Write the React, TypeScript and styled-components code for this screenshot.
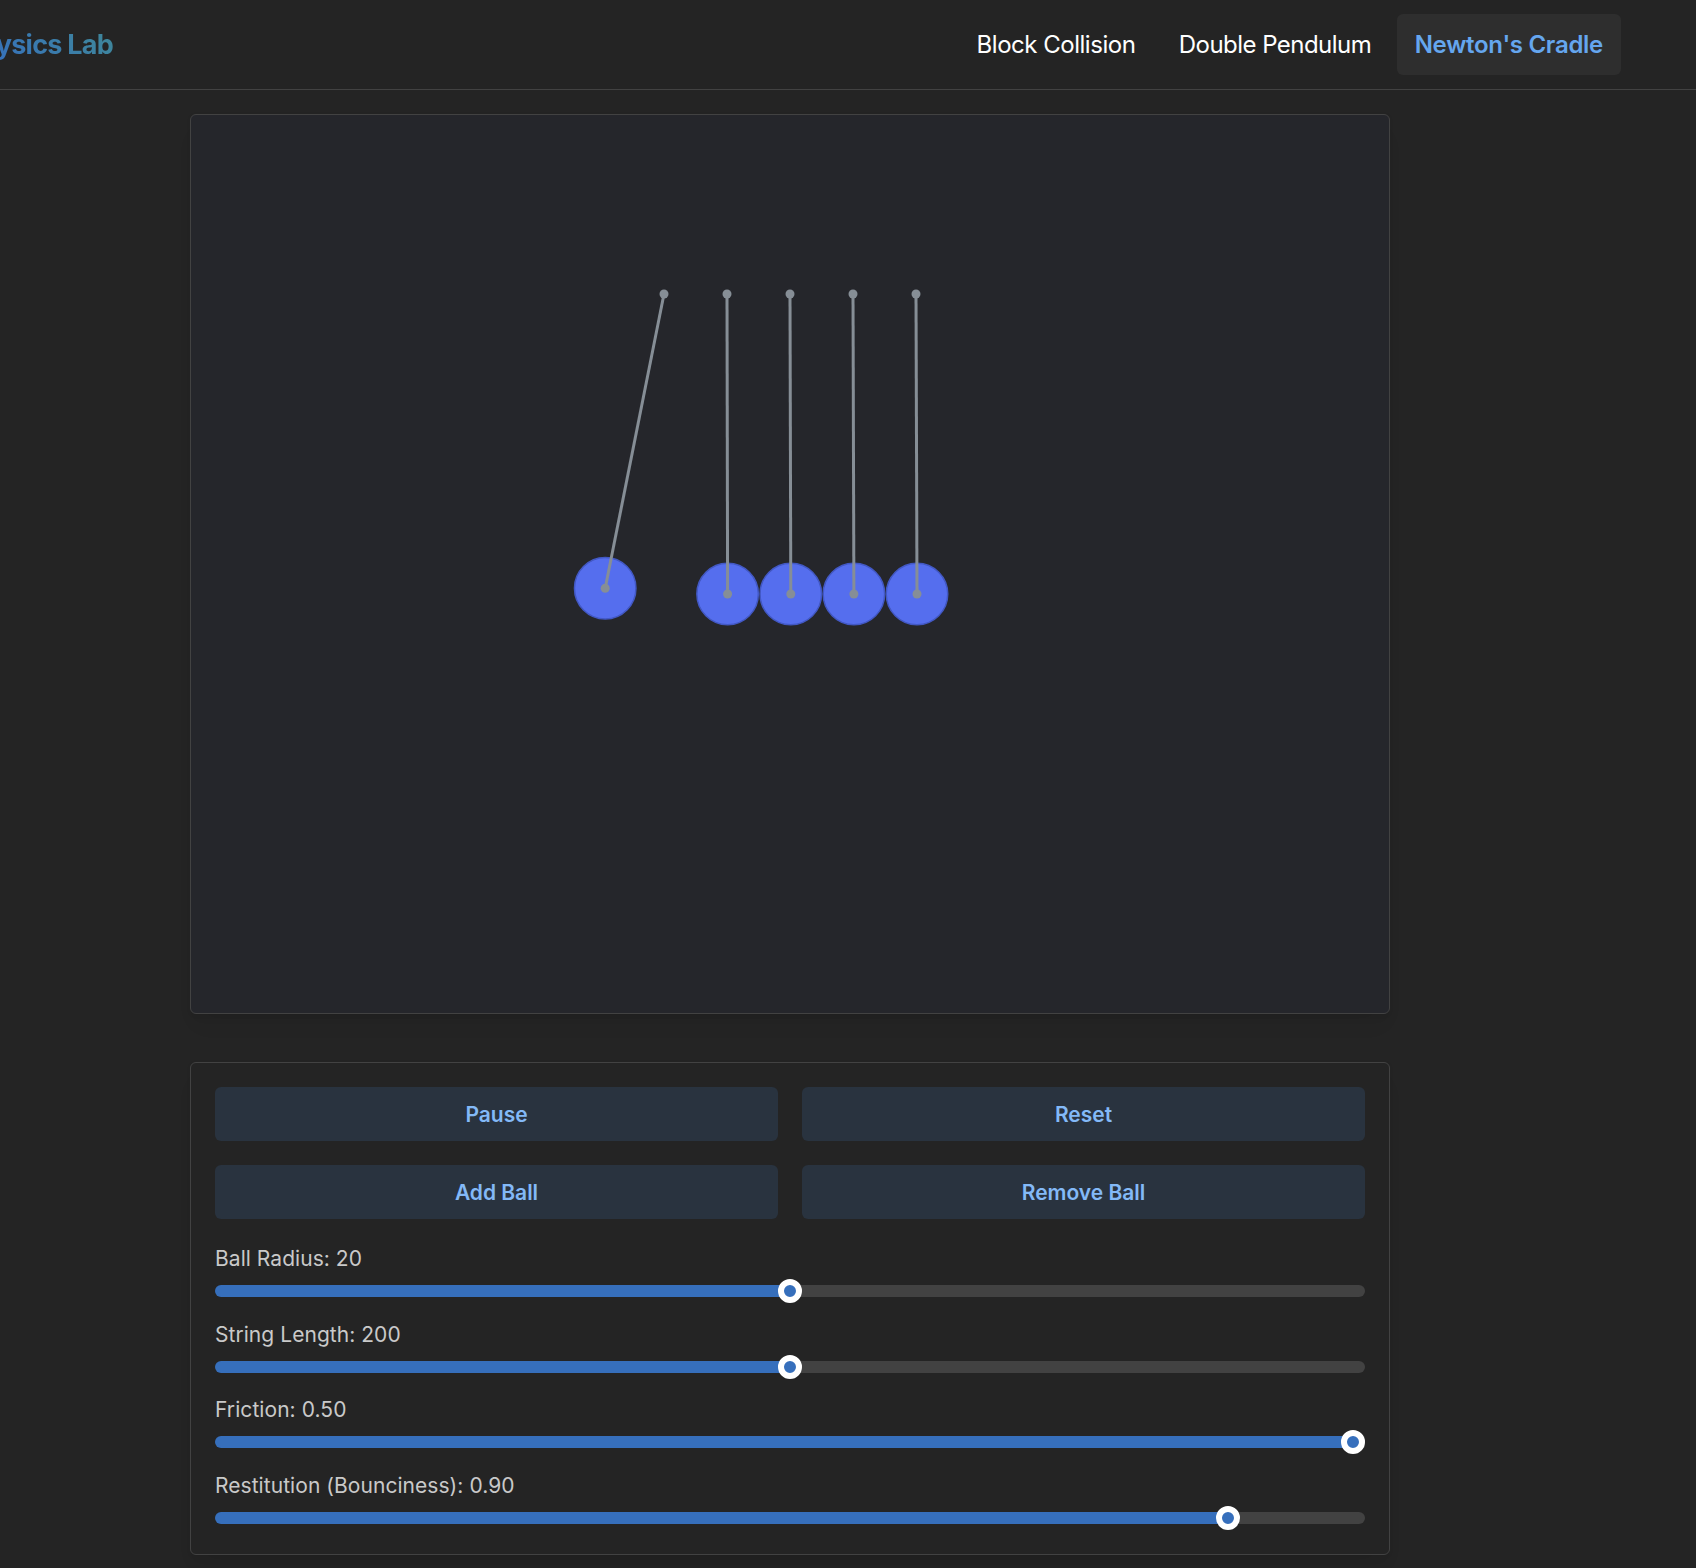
import React from "react";
import styled, { createGlobalStyle } from "styled-components";

const GlobalStyle = createGlobalStyle`
  *, *::before, *::after { box-sizing: border-box; }
  html, body { margin: 0; padding: 0; background: #242424; overflow: hidden; }
  body { font-family: Inter, "Liberation Sans", sans-serif; color: #c9c9c9; }
`;

const Page = styled.div`
  height: 1568px;
  overflow: hidden;
`;

const Header = styled.header`
  display: flex;
  align-items: center;
  justify-content: space-between;
  height: 90px;
  padding: 0 75px 1px 0;
  border-bottom: 1px solid #424242;
`;

const Brand = styled.div`
  display: flex;
  justify-content: flex-end;
  width: 113px;
  padding-top: 2px;
`;

const Title = styled.h1`
  flex: none;
  margin: 0;
  font-size: 27px;
  line-height: 36px;
  font-weight: 700;
  letter-spacing: -0.75px;
  white-space: nowrap;
  color: transparent;
  background: linear-gradient(45deg, #3670bd 15%, #3f8898 100%);
  background-clip: text;
  -webkit-background-clip: text;
`;

const Nav = styled.nav`
  display: flex;
  gap: 7.5px;
`;

const NavLink = styled.a<{ $active?: boolean; $tracking: number }>`
  display: flex;
  align-items: center;
  height: 61px;
  padding: 0 18px;
  border-radius: 6px;
  font-size: 24px;
  letter-spacing: ${(p) => p.$tracking}px;
  white-space: nowrap;
  font-weight: ${(p) => (p.$active ? 600 : 400)};
  color: ${(p) => (p.$active ? "#65a6ee" : "#ffffff")};
  background: ${(p) => (p.$active ? "#2e2e2e" : "transparent")};
`;

const Main = styled.main`
  display: flex;
  flex-direction: column;
  gap: 48px;
  width: 1200px;
  margin: 24px 0 0 190px;
`;

const Card = styled.section`
  border: 1px solid #424242;
  border-radius: 6px;
  box-shadow: 0 1.5px 4.5px rgba(0, 0, 0, 0.05), 0 15px 22px -7px rgba(0, 0, 0, 0.05),
    0 10px 10px -7px rgba(0, 0, 0, 0.04);
`;

const Stage = styled(Card)`
  height: 900px;
  background: #25262b;
  overflow: hidden;

  svg { display: block; }
`;

const Panel = styled(Card)`
  height: 493px;
  padding: 24px;
`;

const Buttons = styled.div`
  display: grid;
  grid-template-columns: 1fr 1fr;
  gap: 24px;
`;

const Button = styled.button`
  height: 54px;
  padding: 2px 0 0;
  border: 0;
  border-radius: 6px;
  background: #29333f;
  color: #83b9f7;
  font: 600 21px/52px Inter, "Liberation Sans", sans-serif;
  letter-spacing: -0.02px;
`;

const Sliders = styled.div`
  margin-top: 24px;
`;

const Field = styled.div`
  height: 75.55px;
`;

const Label = styled.div<{ $tracking: number }>`
  height: 36px;
  font-size: 21px;
  line-height: 31.6px;
  letter-spacing: ${(p) => p.$tracking}px;
  white-space: nowrap;
`;

const Track = styled.div`
  display: flex;
  align-items: center;
  height: 24px;
`;

const Fill = styled.div`
  flex: none;
  height: 12px;
  border-radius: 6px 0 0 6px;
  background: #366fbc;
`;

const Thumb = styled.div`
  flex: none;
  width: 24px;
  height: 24px;
  border: 6px solid #ffffff;
  border-radius: 50%;
  background: #366fbc;
  margin: 0 -2px;
  z-index: 1;
`;

const Rest = styled.div`
  flex: 1;
  height: 12px;
  border-radius: 0 6px 6px 0;
  background: #424242;
`;

const pendulums = [
  { px: 664, bx: 605.2, by: 588.3 },
  { px: 727, bx: 727.6, by: 594 },
  { px: 790, bx: 790.8, by: 594 },
  { px: 853, bx: 853.9, by: 594 },
  { px: 916, bx: 917, by: 594 },
];

const fields = [
  { label: "Ball Radius: 20", tracking: 0.05, at: 0.5 },
  { label: "String Length: 200", tracking: 0.05, at: 0.5 },
  { label: "Friction: 0.50", tracking: 0.07, at: 1 },
  { label: "Restitution (Bounciness): 0.90", tracking: 0.055, at: 8 / 9 },
];

function Cradle() {
  return (
    <svg width="1198" height="898" viewBox="191 115 1198 898">
      {pendulums.map((p) => (
        <circle key={p.px} cx={p.bx} cy={p.by} r="30.75" fill="#556eee" stroke="#4258c4" strokeWidth="1.5" />
      ))}
      {pendulums.map((p) => (
        <g key={p.px} stroke="#868e96" fill="#868e96">
          <line x1={p.px} y1="294" x2={p.bx} y2={p.by} strokeWidth="3" />
          <circle cx={p.px} cy="294" r="4.5" stroke="none" />
          <circle cx={p.bx} cy={p.by} r="4.5" stroke="none" />
        </g>
      ))}
    </svg>
  );
}

export default function App() {
  return (
    <Page>
      <GlobalStyle />
      <Header>
        <Brand>
          <Title>Physics Lab</Title>
        </Brand>
        <Nav>
          <NavLink $tracking={-0.48}>Block Collision</NavLink>
          <NavLink $tracking={-0.54}>Double Pendulum</NavLink>
          <NavLink $tracking={-0.28} $active>Newton's Cradle</NavLink>
        </Nav>
      </Header>
      <Main>
        <Stage>
          <Cradle />
        </Stage>
        <Panel>
          <Buttons>
            <Button>Pause</Button>
            <Button>Reset</Button>
            <Button>Add Ball</Button>
            <Button>Remove Ball</Button>
          </Buttons>
          <Sliders>
            {fields.map((f) => (
              <Field key={f.label}>
                <Label $tracking={f.tracking}>{f.label}</Label>
                <Track>
                  <Fill style={{ width: 2 + f.at * 1126 }} />
                  <Thumb />
                  <Rest />
                </Track>
              </Field>
            ))}
          </Sliders>
        </Panel>
      </Main>
    </Page>
  );
}
